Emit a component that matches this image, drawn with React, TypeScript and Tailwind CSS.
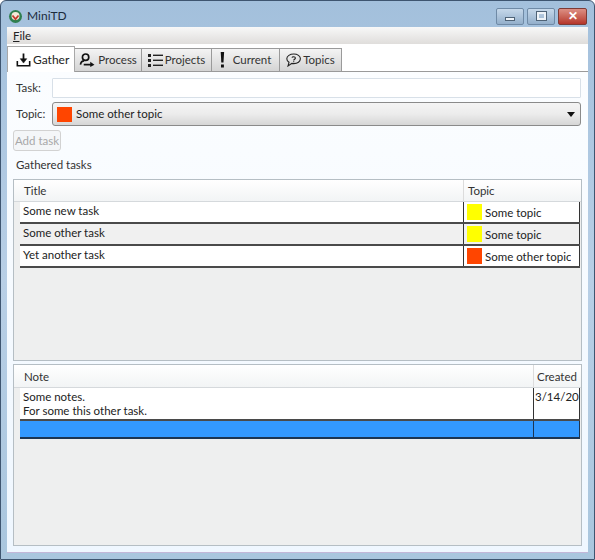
import React from 'react';

const font = { fontFamily: 'Lato, "Open Sans", sans-serif' };

const GatherIcon = () => (
  <svg width="15" height="16" viewBox="0 0 17 17" fill="none" stroke="#111" strokeWidth="1.8">
    <path d="M8.5 1v7" strokeWidth="2" />
    <path d="M4.8 7 8.5 12l3.7-5z" fill="#111" strokeWidth="0.6" />
    <path d="M1.500 9.500v5.500h14V9.500" />
  </svg>
);

const ProcessIcon = () => (
  <svg width="16" height="14" viewBox="0 0 17 15" fill="none" stroke="#111" strokeWidth="1.8">
    <circle cx="7" cy="4.500" r="3.400" />
    <path d="M1.500 12.500c.4-2.600 2-4 4-4" />
    <path d="M5 12.500h8" />
    <path d="M12 9.500l4.500 3-4.500 2.500z" fill="#111" stroke="none" />
  </svg>
);

const ProjectsIcon = () => (
  <svg width="15" height="15" viewBox="0 0 15 15" fill="#222">
    <rect x="0" y="1" width="3" height="3" />
    <rect x="0" y="6" width="3" height="3" />
    <rect x="0" y="11" width="3" height="3" />
    <rect x="5" y="1.600" width="10" height="1.400" />
    <rect x="5" y="6.600" width="10" height="1.400" />
    <rect x="5" y="11.600" width="10" height="1.400" />
  </svg>
);

const CurrentIcon = () => (
  <svg width="5" height="16" viewBox="0 0 5 16" fill="#111">
    <path d="M.7 0h3.400l-.6 10.500H1.300z" />
    <rect x="1" y="12.500" width="2.900" height="3" />
  </svg>
);

const TopicsIcon = () => (
  <svg width="15" height="14" viewBox="0 0 15 14" fill="none" stroke="#222" strokeWidth="1.100">
    <path d="M7.800 1C4 1 .8 3 .8 5.800c0 1.500.9 2.700 2.200 3.500L2 13l3.900-2.600c.6.100 1.200.2 1.900.2 3.700 0 6.600-2.100 6.600-4.800S11.500 1 7.800 1z" />
    <path d="M6 4.600c.2-1 3.300-1.300 3.400.4.100 1.300-1.700 1.200-1.700 2.500" />
    <path d="M7.700 8.200v1" />
  </svg>
);

const tabs = [
  { label: 'Process', icon: <ProcessIcon />, w: 'w-[67px]', gap: 'gap-[3px]' },
  { label: 'Projects', icon: <ProjectsIcon />, w: 'w-[70px]', gap: 'gap-[2px]' },
  { label: 'Current', icon: <CurrentIcon />, w: 'w-[68px]', gap: 'gap-[8px]' },
  { label: 'Topics', icon: <TopicsIcon />, w: 'w-[62px]', gap: 'gap-[2px]' },
];

const taskRows = [
  { title: 'Some new task', topic: 'Some topic', color: 'bg-[#ffff00]', bg: 'bg-white' },
  { title: 'Some other task', topic: 'Some topic', color: 'bg-[#ffff00]', bg: 'bg-[#f0f0f0]' },
  { title: 'Yet another task', topic: 'Some other topic', color: 'bg-[#ff4500]', bg: 'bg-white' },
];

const Swatch = ({ color }: { color: string }) => (
  <span className={`${color} w-[15px] h-[16px] shrink-0 block`} />
);

const App = () => {
  return (
    <div
      style={font}
      className="w-[595px] h-[560px] flex flex-col overflow-hidden rounded-t-[6px] border border-[#3e5570] bg-gradient-to-b from-[#a3c0dc] via-[#b8cfe6] to-[#a9c6de] text-[11.5px] text-[#222]"
    >
      {/* Title bar */}
      <div className="h-[26px] shrink-0 flex items-center pl-[7px] pr-[7px] pt-[4px]">
        <svg width="15" height="15" viewBox="0 0 15 15" className="mr-[4px]">
          <circle cx="7.500" cy="7.500" r="6.500" fill="#2f7f4f" />
          <circle cx="7.500" cy="7" r="4" fill="#f4e9d8" />
          <path d="M4.500 6.500 7.500 10l3-3.500" fill="none" stroke="#c23a2c" strokeWidth="1.800" />
        </svg>
        <span className="text-[12px] text-[#1c2c3c]">MiniTD</span>
        <div className="ml-auto flex gap-[3px]">
          <div className="w-[28px] h-[17px] rounded-[2px] border border-[#6f8aa6] bg-gradient-to-b from-[#c6d8ea] to-[#93afcb] flex items-center justify-center">
            <span className="w-[10px] h-[4px] mt-[5px] bg-[#eef3f8] border border-[#4f6377]" />
          </div>
          <div className="w-[28px] h-[17px] rounded-[2px] border border-[#6f8aa6] bg-gradient-to-b from-[#c6d8ea] to-[#93afcb] flex items-center justify-center">
            <span className="w-[9px] h-[8px] border-2 border-[#eef3f8] outline outline-1 outline-[#4f6377]" />
          </div>
          <div className="w-[29px] h-[17px] rounded-[2px] border border-[#7d3b36] bg-gradient-to-b from-[#dc8f84] to-[#b5342a] flex items-center justify-center text-white font-bold text-[12px] leading-none">
            ✕
          </div>
        </div>
      </div>

      {/* Client area */}
      <div className="flex-1 min-h-0 mx-[6px] mb-[6px] flex flex-col bg-[#f3f9ff] border-b border-[#c3b7d8]">
        {/* Menu */}
        <div className="h-[17px] shrink-0 bg-gradient-to-b from-[#f8f8f8] to-[#dfdddb] pl-[6px] leading-[17px] text-[#222]">
          <span className="underline">F</span>ile
        </div>

        {/* Tab strip */}
        <div className="h-[28px] shrink-0 bg-white flex items-end border-b border-[#9a9a9a]">
          <div className="relative z-10 w-[68px] h-[26px] -mb-[1px] bg-white border border-b-0 border-[#a8a8a8] flex items-center gap-[2px] pl-[8px] text-[12px]">
            <GatherIcon />
            <span>Gather</span>
          </div>
          {tabs.map(tab => (
            <div
              key={tab.label}
              className={`${tab.w} ${tab.gap} h-[23px] bg-gradient-to-b from-[#f4f4f4] to-[#d4d4d4] border border-b-0 border-l-0 border-[#9a9a9a] flex items-center justify-center text-[#333]`}
            >
              {tab.icon}
              <span>{tab.label}</span>
            </div>
          ))}
        </div>

        {/* Gather panel */}
        <div className="flex-1 min-h-0 flex flex-col pl-[6px] pr-[6px] pt-[6px] pb-[6px] bg-gradient-to-b from-[#fbfdff] to-[#eff7ff]">
          <div className="flex items-center h-[20px] mr-[1px]">
            <span className="w-[39px] pl-[3px] text-[#333]">Task:</span>
            <div className="flex-1 h-[20px] bg-white border border-[#d8e0e8] rounded-[1px]" />
          </div>

          <div className="flex items-center h-[24px] mt-[4px] mr-[1px]">
            <span className="w-[39px] pl-[3px] text-[#333]">Topic:</span>
            <div className="flex-1 h-[24px] flex items-center pl-[4px] pr-[3px] gap-[4px] border border-[#8a8a8a] rounded-[3px] bg-gradient-to-b from-[#f4f4f4] via-[#ececec] to-[#d6d6d6]">
              <span className="bg-[#ff4500] w-[15px] h-[15px] shrink-0 block" />
              <span>Some other topic</span>
              <span className="ml-auto mr-[2px] w-0 h-0 border-x-[4px] border-x-transparent border-t-[5px] border-t-[#111]" />
            </div>
          </div>

          <div className="w-[48px] h-[21px] mt-[4px] flex items-center justify-center whitespace-nowrap border border-[#d2d2d2] rounded-[3px] bg-[#f4f6f8] text-[#a8a8a8]">
            Add task
          </div>

          <div className="mt-[6px] h-[16px] leading-[16px] pl-[3px] text-[#333]">Gathered tasks</div>

          {/* Tasks grid */}
          <div className="h-[182px] mt-[6px] shrink-0 border border-[#b5bec4] bg-[#eeefef] flex flex-col">
            <div className="h-[22px] shrink-0 flex bg-gradient-to-b from-white to-[#f2f4f5] border-b border-[#d5d9dc] pl-[6px] leading-[22px] text-[#333]">
              <span className="w-[443px] pl-[4px]">Title</span>
              <span className="pl-[4px] border-l border-[#dcdcdc]">Topic</span>
            </div>
            {taskRows.map(row => (
              <div key={row.title} className={`${row.bg} h-[22px] shrink-0 ml-[6px] mr-[1px] flex border-b-2 border-[#4a4a4a]`}>
                <span className="w-[443px] pl-[3px] leading-[18px] truncate">{row.title}</span>
                <div className="flex-1 flex items-center gap-[3px] pl-[3px] border-l border-r border-[#333]">
                  <Swatch color={row.color} />
                  <span className="truncate mt-[1px]">{row.topic}</span>
                </div>
              </div>
            ))}
          </div>

          {/* Notes grid */}
          <div className="flex-1 min-h-0 mt-[3px] border border-[#b5bec4] bg-[#eeefef] flex flex-col">
            <div className="h-[23px] shrink-0 flex bg-gradient-to-b from-white to-[#f2f4f5] border-b border-[#d5d9dc] pl-[6px] leading-[23px] text-[#333]">
              <span className="w-[513px] pl-[4px]">Note</span>
              <span className="pl-[3px] border-l border-[#dcdcdc]">Created</span>
            </div>
            <div className="h-[33px] shrink-0 ml-[6px] mr-[1px] bg-white flex border-b-2 border-[#4a4a4a]">
              <div className="w-[513px] pl-[3px] pt-[2px] leading-[14px]">
                Some notes.
                <br />
                For some this other task.
              </div>
              <div className="flex-1 overflow-hidden whitespace-nowrap pl-[1px] pt-[2px] leading-[14px] border-l border-r border-[#333]">
                3/14/2013
              </div>
            </div>
            <div className="h-[18px] shrink-0 ml-[6px] mr-[1px] bg-[#3399ff] flex border-b-2 border-[#1c3552]">
              <div className="w-[513px]" />
              <div className="flex-1 border-l border-r border-[#1c3552]" />
            </div>
          </div>
        </div>
      </div>
    </div>
  );
};

export default App;
